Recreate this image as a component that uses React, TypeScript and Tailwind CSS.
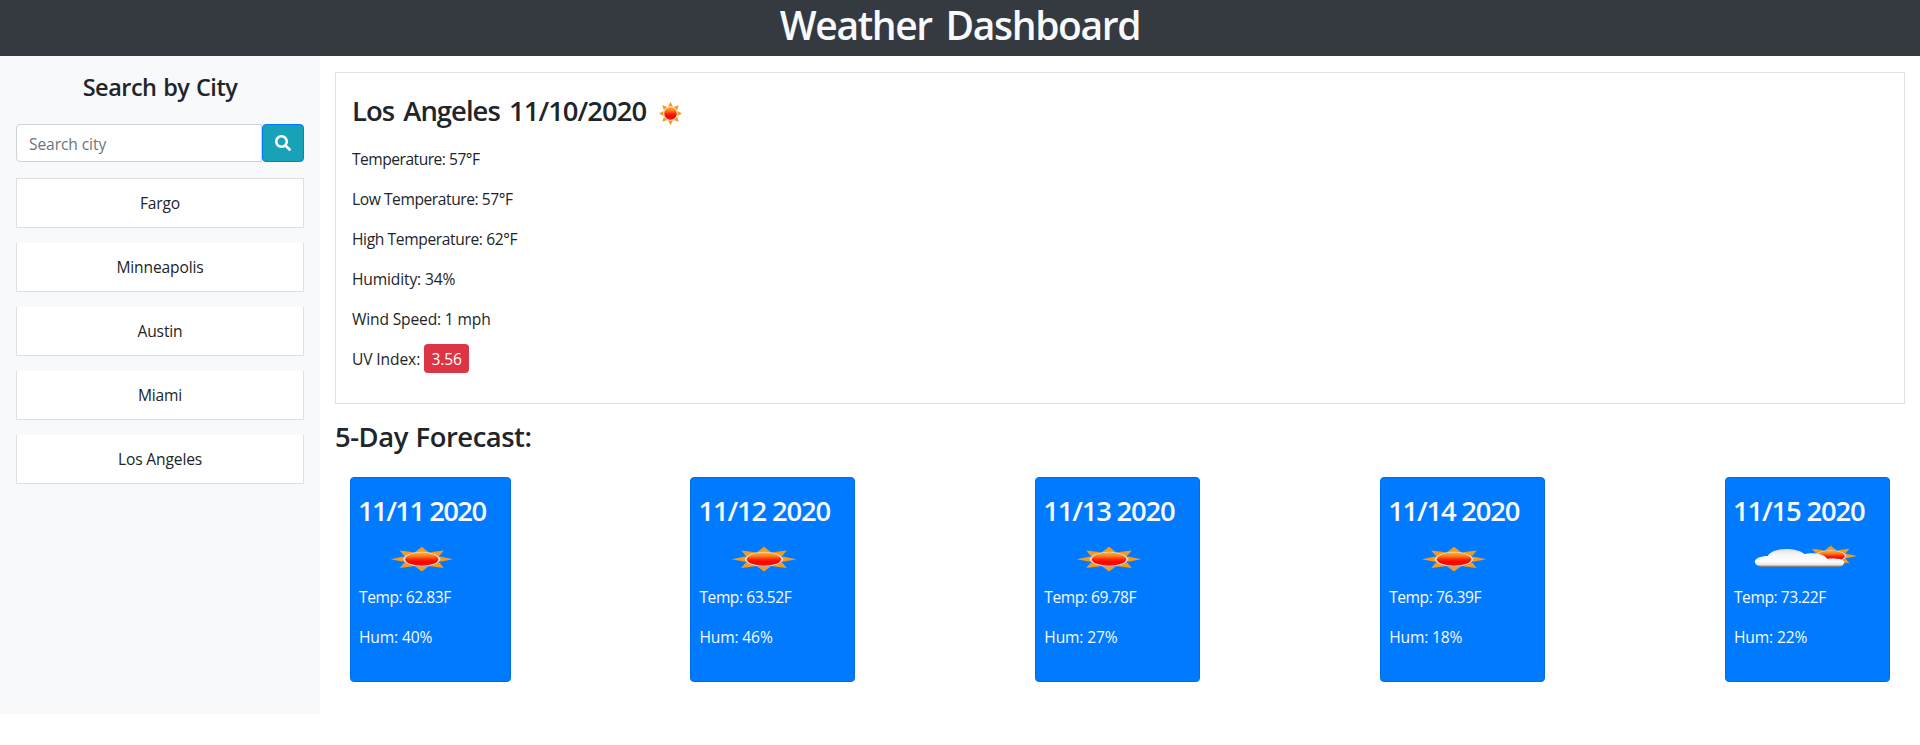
import { useId } from "react";
import { FaSearch } from "react-icons/fa";

const cities = ["Fargo", "Minneapolis", "Austin", "Miami", "Los Angeles"];

const readings = [
  { text: "Temperature: 57°F", tracking: "tracking-[-0.5px]" },
  { text: "Low Temperature: 57°F", tracking: "tracking-[-0.43px]" },
  { text: "High Temperature: 62°F", tracking: "tracking-[-0.38px]" },
  { text: "Humidity: 34%", tracking: "tracking-[-0.15px]" },
  { text: "Wind Speed: 1 mph", tracking: "tracking-[-0.16px]" },
];

const days = [
  { date: "11/11 2020", temp: "62.83", hum: 40, icon: "sun", width: "w-[160.6px]", tracking: "tracking-[-1.55px]" },
  { date: "11/12 2020", temp: "63.52", hum: 46, icon: "sun", width: "w-[165px]", tracking: "tracking-[-1.15px]" },
  { date: "11/13 2020", temp: "69.78", hum: 27, icon: "sun", width: "w-[165px]", tracking: "tracking-[-1.2px]" },
  { date: "11/14 2020", temp: "76.39", hum: 18, icon: "sun", width: "w-[165px]", tracking: "tracking-[-1.2px]" },
  { date: "11/15 2020", temp: "73.22", hum: 22, icon: "cloud", width: "w-[165px]", tracking: "tracking-[-1.15px]" },
];

const angles = [0, 45, 90, 135, 180, 225, 270, 315];

function SunShape({ id }: { id: string }) {
  return (
    <g>
      <defs>
        <linearGradient id={id} x1="0" y1="0" x2="0" y2="1">
          <stop offset="0" stopColor="#ffb224" />
          <stop offset="0.28" stopColor="#fb7a1c" />
          <stop offset="0.5" stopColor="#fb2a08" />
          <stop offset="0.7" stopColor="#ff0000" />
          <stop offset="1" stopColor="#f21404" />
        </linearGradient>
      </defs>
      {angles.map((a) => (
        <path key={a} d="M-2.6 -7.3 L0 -12.4 L2.6 -7.3 Z" fill="#f79a1b" transform={`rotate(${a})`} />
      ))}
      <circle r="7.4" fill="#fbd9b4" />
      <circle r="6.6" fill={`url(#${id})`} />
    </g>
  );
}

function SunIcon({ className, viewBox }: { className: string; viewBox: string }) {
  const id = useId();
  return (
    <svg className={className} viewBox={viewBox} preserveAspectRatio="none" aria-hidden="true">
      <g transform="translate(25 25.2)">
        <SunShape id={id} />
      </g>
    </svg>
  );
}

function CloudSunIcon({ className }: { className: string }) {
  const id = useId();
  return (
    <svg className={className} viewBox="0 0 50 50" preserveAspectRatio="none" aria-hidden="true">
      <defs>
        <linearGradient id={`${id}c`} gradientUnits="userSpaceOnUse" x1="0" y1="15" x2="0" y2="34">
          <stop offset="0" stopColor="#dcdcdc" />
          <stop offset="0.25" stopColor="#f4f4f4" />
          <stop offset="0.65" stopColor="#ffffff" />
          <stop offset="0.84" stopColor="#e4e4e4" />
          <stop offset="0.91" stopColor="#8a8a8a" />
          <stop offset="1" stopColor="#4c5866" />
        </linearGradient>
      </defs>
      <g transform="translate(37.2 22) scale(0.82)">
        <SunShape id={`${id}s`} />
      </g>
      <path
        d="M12.5 34 C9.8 33.6 8 31 8 27.6 C8 24.2 10.3 21.9 13 21.9 C13.8 17.8 16.4 15 19.8 15 C23.2 15 25.8 17 27.1 20 C28 19.5 29.2 19.2 30.6 19.3 C33 19.5 34.9 21.5 35.8 24.8 C37 24.3 39.2 24.4 40.6 25 C42 25.8 42.6 27.4 42.4 29 C42 31.8 40.6 33.7 38.4 34 Z"
        fill={`url(#${id}c)`}
      />
    </svg>
  );
}

export default function App() {
  return (
    <div className="min-h-[745px] bg-white font-['Open_Sans','Noto_Sans',sans-serif] text-[15.6px] leading-6 text-[#212529]">
      <header className="h-14 bg-[#343a40] pt-px text-center">
        <h1 className="text-[39px] leading-[48px] font-semibold tracking-[-1.35px] text-[#f8f9fa] [word-spacing:5px]">
          Weather Dashboard
        </h1>
      </header>

      <div className="flex items-start">
        <aside className="h-[658px] w-80 shrink-0 bg-[#f8f9fa] px-4 pt-[17px]">
          <h3 className="text-center text-[23.5px] leading-7 font-semibold tracking-[-0.5px] [word-spacing:1px]">
            Search by City
          </h3>
          <form className="mt-[23px] flex h-[38px]" onSubmit={(e) => e.preventDefault()}>
            <input
              type="text"
              placeholder="Search city"
              className="w-[246px] rounded-l border border-[#ced4da] bg-white px-3 pt-0.5 tracking-[-0.1px] outline-none placeholder:text-[#6c757d]"
            />
            <button
              aria-label="Search"
              className="flex w-[42px] items-center justify-center rounded border border-[#007bff] bg-[#17a2b8] text-base text-white"
            >
              <FaSearch />
            </button>
          </form>
          <ul className="mt-4 flex flex-col gap-[15px]">
            {cities.map((city) => (
              <li
                key={city}
                className="border border-t-0 border-[#dfdfdf] bg-white py-3 text-center tracking-[-0.15px] first:border-t"
              >
                {city}
              </li>
            ))}
          </ul>
        </aside>

        <main className="flex-1 px-[15px] pt-4">
          <section className="border border-[#dee2e6] px-4 pt-[21px] pb-4">
            <h2 className="mb-[19px] flex h-[34px] items-center text-[27.4px] leading-[34px] font-semibold tracking-[-0.95px] [word-spacing:3px]">
              Los Angeles 11/10/2020
              <SunIcon className="mt-1 ml-[13px] size-[23px]" viewBox="12.8 13 24.4 24.4" />
            </h2>
            {readings.map((r) => (
              <p key={r.text} className={`mb-4 ${r.tracking}`}>
                {r.text}
              </p>
            ))}
            <p className="mb-4 flex items-center gap-1 tracking-[-0.12px]">
              UV Index:
              <span className="-mt-[5px] -mb-1 h-[29px] w-[45px] rounded bg-[#dc3545] text-center leading-[30px] text-white">
                3.56
              </span>
            </p>
          </section>

          <h2 className="mt-4 text-[27.4px] leading-[34px] font-semibold tracking-[-0.45px] [word-spacing:1px]">
            5-Day Forecast:
          </h2>

          <section className="mt-[23px] flex justify-between px-[15px]">
            {days.map((d) => (
              <article
                key={d.date}
                className={`h-[205px] rounded border border-[#006fe6] bg-[#007bff] pt-4 pr-[25px] pl-2 text-[#f8f9fa] ${d.width}`}
              >
                <h2 className={`-ml-px text-[27.4px] leading-[34px] font-semibold whitespace-nowrap ${d.tracking}`}>
                  {d.date}
                </h2>
                {d.icon === "sun" ? (
                  <SunIcon className="mt-1.5 block h-[50px] w-full" viewBox="0 0 50 50" />
                ) : (
                  <CloudSunIcon className="mt-1.5 block h-[50px] w-full" />
                )}
                <p className="mt-px mb-4 tracking-[-0.45px]">Temp: {d.temp}F</p>
                <p className="tracking-[-0.15px]">Hum: {d.hum}%</p>
              </article>
            ))}
          </section>
        </main>
      </div>
    </div>
  );
}
